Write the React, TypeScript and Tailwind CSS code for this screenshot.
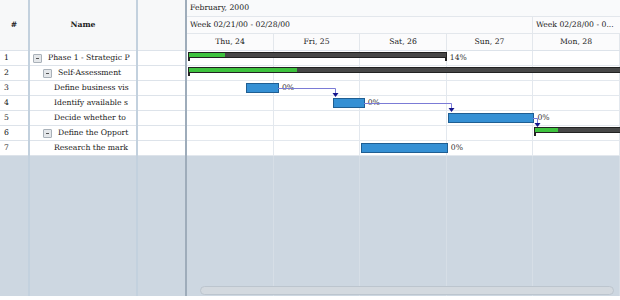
import React from "react";

const DAYS = ["Thu, 24", "Fri, 25", "Sat, 26", "Sun, 27", "Mon, 28"];
const DAY_W = [87, 86, 87, 86, 87];
const D = 86.6;

type Task = {
  id: number;
  name: string;
  level: number;
  expander?: boolean;
  kind: "summary" | "task";
  start: number;
  end: number;
  done: number;
  label?: string;
};

const TASKS: Task[] = [
  { id: 1, name: "Phase 1 - Strategic P", level: 0, expander: true, kind: "summary", start: 0, end: 3, done: 0.14, label: "14%" },
  { id: 2, name: "Self-Assessment", level: 1, expander: true, kind: "summary", start: 0, end: 5.2, done: 0.24 },
  { id: 3, name: "Define business vis", level: 2, kind: "task", start: 0.67, end: 1.05, done: 0, label: "0%" },
  { id: 4, name: "Identify available s", level: 2, kind: "task", start: 1.67, end: 2.04, done: 0, label: "0%" },
  { id: 5, name: "Decide whether to", level: 2, kind: "task", start: 3, end: 4, done: 0, label: "0%" },
  { id: 6, name: "Define the Opport", level: 1, expander: true, kind: "summary", start: 4, end: 5.2, done: 0.22 },
  { id: 7, name: "Research the mark", level: 2, kind: "task", start: 2, end: 3, done: 0, label: "0%" },
];

function Expander() {
  return (
    <span className="mr-[6px] flex h-[9px] w-[9px] shrink-0 items-center justify-center rounded-[1px] border border-[#a9b1b9] bg-[#e4e7ea]">
      <span className="h-px w-[3px] bg-[#555]" />
    </span>
  );
}

function Bar({ t }: { t: Task }) {
  const left = t.start * D + 1;
  const width = (t.end - t.start) * D - (t.start === 0 ? 1 : 0);
  if (t.kind === "summary") {
    return (
      <>
        <div
          className="absolute top-[1px] h-[6px] overflow-hidden border border-[#222] bg-[#474747]"
          style={{ left, width }}
        >
          <div className="h-full bg-[#3ec33e]" style={{ width: width * t.done }} />
        </div>
        <div className="absolute top-[6px] h-[4px] w-[2px] bg-[#222]" style={{ left }} />
        <div className="absolute top-[6px] h-[4px] w-[2px] bg-[#222]" style={{ left: left + width - 2 }} />
        {t.label && (
          <span className="absolute top-[2px] text-[7.7px] leading-[10px] text-[#333]" style={{ left: left + width + 3 }}>
            {t.label}
          </span>
        )}
      </>
    );
  }
  return (
    <>
      <div
        className="absolute top-[2px] h-[10px] border border-[#1f5e92] bg-[#3590d4]"
        style={{ left, width }}
      />
      {t.label && (
        <span className="absolute top-[2px] text-[7.7px] leading-[10px] text-[#333]" style={{ left: left + width + 3 }}>
          {t.label}
        </span>
      )}
    </>
  );
}

function Links() {
  const line = "#7b7bd6";
  const head = "#14148c";
  const paths = [
    "M91 37.5 H148.5 V44",
    "M177 52.5 H264.5 V59",
    "M346 67.5 H350.5 V74",
  ];
  const heads = [148.5, 264.5, 350.5];
  const tips = [46, 61, 76];
  return (
    <svg className="pointer-events-none absolute left-0 top-0" width={433} height={105}>
      {paths.map((d) => (
        <path key={d} d={d} fill="none" stroke={line} strokeWidth={1} />
      ))}
      {heads.map((x, i) => (
        <path key={x} d={`M${x - 3} ${tips[i] - 4} L${x + 3} ${tips[i] - 4} L${x} ${tips[i]} Z`} fill={head} />
      ))}
    </svg>
  );
}

export default function App() {
  return (
    <div
      className="flex h-[296px] w-[620px] overflow-hidden bg-[#cdd7e1] text-[#222]"
      style={{ fontFamily: '"DejaVu Serif", serif' }}
    >
      {/* grid */}
      <div className="flex w-[185px] shrink-0">
        <div className="flex w-[30px] flex-col border-r-2 border-[#c3d1de]">
          <div className="flex h-[51px] items-center justify-center border-b border-[#dde3ea] bg-[#f7f8f9] text-[7.7px] font-bold">#</div>
          {TASKS.map((t) => (
            <div key={t.id} className="flex h-[15px] items-center border-b border-[#dde3ea] bg-white pl-[4px] text-[7.7px]">
              {t.id}
            </div>
          ))}
        </div>
        <div className="flex w-[108px] flex-col border-r-2 border-[#c3d1de]">
          <div className="flex h-[51px] items-center justify-center border-b border-[#dde3ea] bg-[#f7f8f9] text-[7.7px] font-bold">Name</div>
          {TASKS.map((t) => (
            <div
              key={t.id}
              className="flex h-[15px] items-center overflow-hidden whitespace-nowrap border-b border-[#dde3ea] bg-white text-[7.7px]"
              style={{ paddingLeft: t.expander ? 3 + t.level * 10 : 4 + t.level * 10 }}
            >
              {t.expander && <Expander />}
              {t.name}
            </div>
          ))}
        </div>
        <div className="flex flex-1 flex-col">
          <div className="h-[51px] border-b border-[#dde3ea] bg-[#f7f8f9]" />
          {TASKS.map((t) => (
            <div key={t.id} className="h-[15px] border-b border-[#dde3ea] bg-white" />
          ))}
        </div>
      </div>

      <div className="w-[2px] shrink-0 bg-[#9eacba]" />

      {/* chart */}
      <div className="relative flex flex-1 flex-col">
        <div className="flex h-[17px] items-center border-b border-[#e3e7ec] bg-[#f9fafb] pl-[3px] text-[7.7px]">
          February, 2000
        </div>
        <div className="flex h-[17px] border-b border-[#e3e7ec] bg-[#fbfbfc] text-[7.7px]">
          <div className="flex w-[346px] items-center border-r border-[#e3e7ec] pl-[3px]">Week 02/21/00 - 02/28/00</div>
          <div className="flex flex-1 items-center whitespace-nowrap pl-[3px]">Week 02/28/00 - 0...</div>
        </div>
        <div className="flex h-[17px] border-b border-[#dde3ea] bg-[#fbfbfc] text-[7.7px]">
          {DAYS.map((d, i) => (
            <div
              key={d}
              className="flex items-center justify-center border-r border-[#e3e7ec]"
              style={{ width: DAY_W[i] }}
            >
              {d}
            </div>
          ))}
        </div>
        <div className="relative">
          {TASKS.map((t) => (
            <div key={t.id} className="relative flex h-[15px]">
              {DAY_W.map((w, i) => (
                <div key={i} className="border-b border-r border-[#e3e8ee] bg-white" style={{ width: w }} />
              ))}
              <Bar t={t} />
            </div>
          ))}
          <Links />
        </div>
        <div className="flex flex-1">
          {DAY_W.map((w, i) => (
            <div key={i} className="border-r border-[#d6dee6]" style={{ width: w }} />
          ))}
        </div>
        <div className="absolute bottom-[1px] left-[13px] right-[6px] h-[9px] rounded-full border border-[#bcc5ce] bg-[#d3d9df]" />
      </div>
    </div>
  );
}
